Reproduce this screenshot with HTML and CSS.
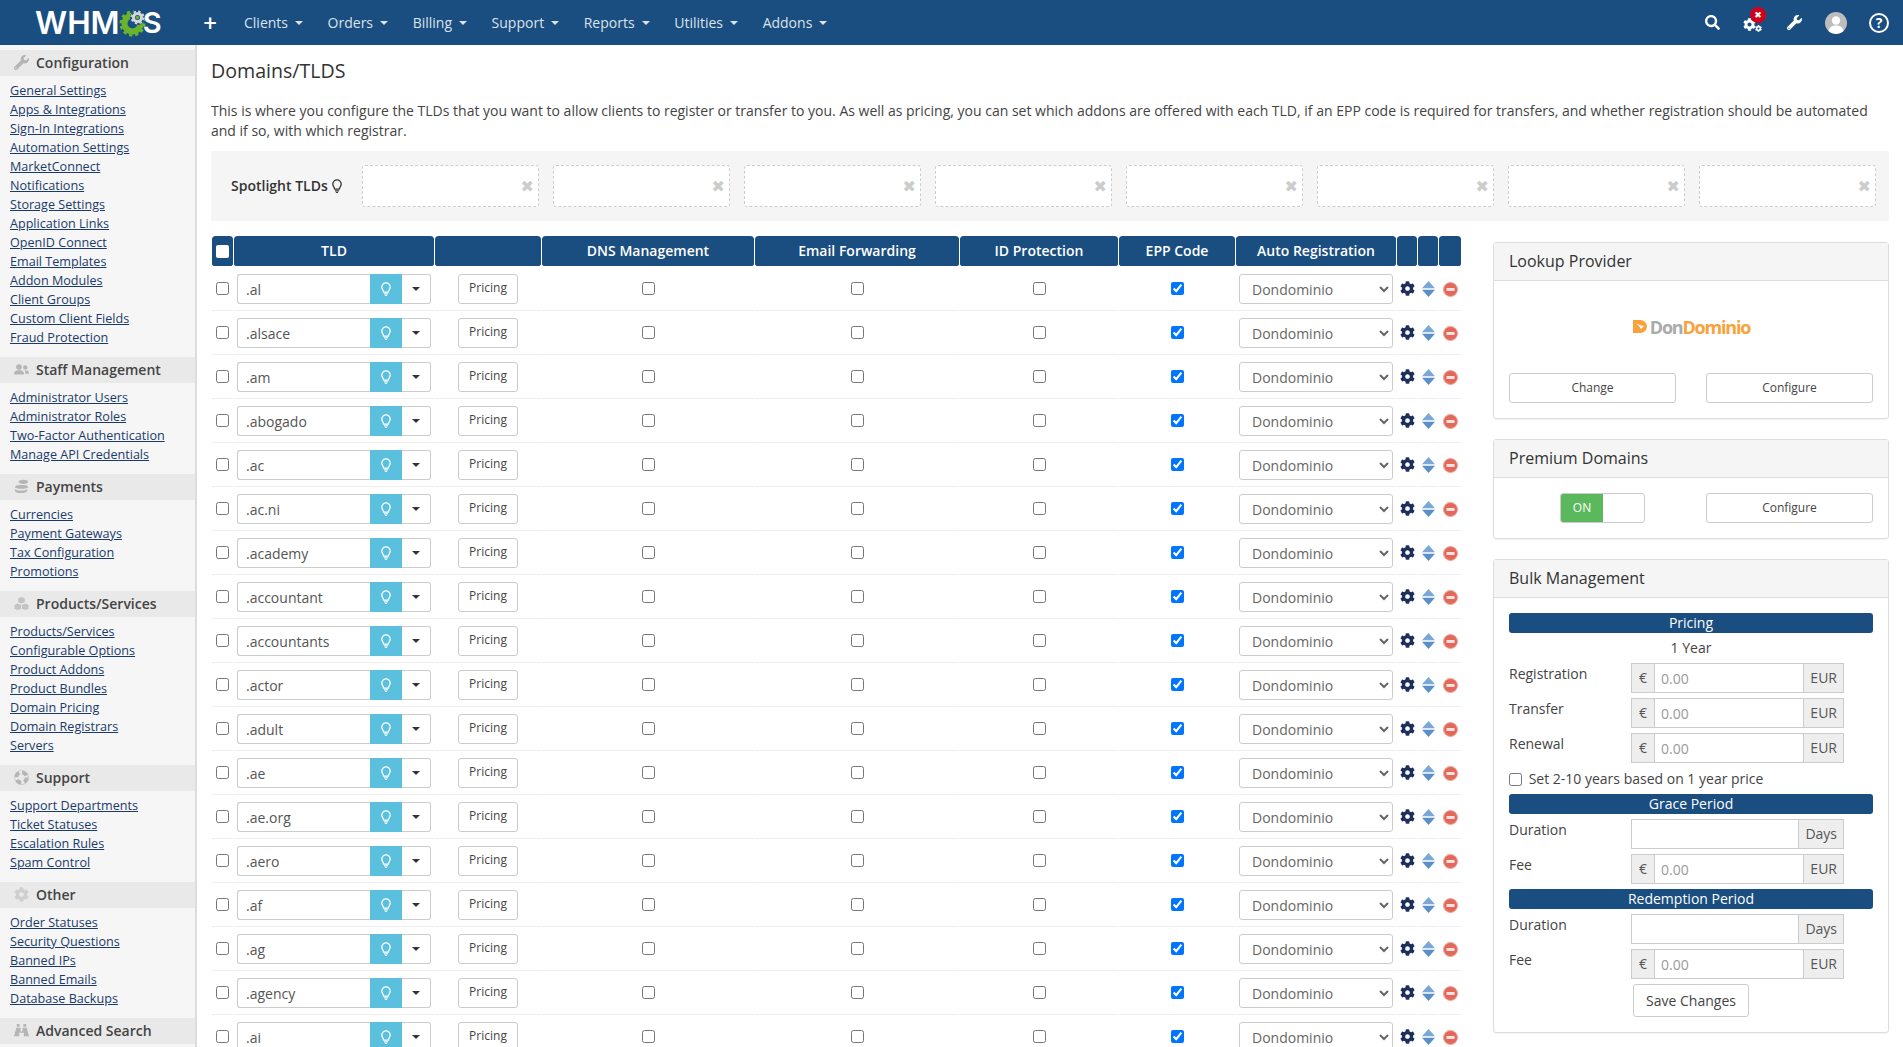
FILE: index.html
```html
<!DOCTYPE html>
<html lang="en">
<head>
    <meta charset="UTF-8">
    <title>Domains/TLDS</title>
    <link rel="stylesheet" href="styles.css">
</head>
<body>
<svg class="defs" width="0" height="0">
    <symbol id="i-cog" viewBox="0 0 512 512"><path d="M487.4 315.7l-42.6-24.6c4.3-23.2 4.3-47 0-70.2l42.6-24.6c4.9-2.8 7.1-8.6 5.5-14-11.1-35.6-30-67.8-54.7-94.6-3.8-4.1-10-5.1-14.8-2.3L380.8 110c-17.9-15.4-38.5-27.3-60.8-35.1V25.8c0-5.6-3.9-10.5-9.4-11.7-36.7-8.2-74.3-7.8-109.2 0-5.5 1.2-9.4 6.1-9.4 11.7V75c-22.2 7.9-42.8 19.8-60.8 35.1L88.7 85.5c-4.9-2.8-11-1.9-14.8 2.3-24.7 26.7-43.6 58.9-54.7 94.6-1.7 5.4.6 11.2 5.5 14L67.3 221c-4.3 23.2-4.3 47 0 70.2l-42.6 24.6c-4.9 2.8-7.1 8.6-5.5 14 11.1 35.6 30 67.8 54.7 94.6 3.8 4.1 10 5.1 14.8 2.3l42.6-24.6c17.9 15.4 38.5 27.3 60.8 35.1v49.2c0 5.6 3.9 10.5 9.4 11.7 36.7 8.2 74.3 7.8 109.2 0 5.5-1.2 9.4-6.1 9.4-11.7v-49.2c22.2-7.9 42.8-19.8 60.8-35.1l42.6 24.6c4.9 2.8 11 1.9 14.8-2.3 24.7-26.7 43.6-58.9 54.7-94.6 1.5-5.5-.7-11.3-5.6-14.1zM256 336c-44.1 0-80-35.9-80-80s35.9-80 80-80 80 35.9 80 80-35.9 80-80 80z"/></symbol>
    <symbol id="i-wrench" viewBox="0 0 512 512"><path d="M507.73 109.1c-2.24-9.03-13.54-12.09-20.12-5.51l-74.36 74.36-67.88-11.31-11.31-67.88 74.36-74.36c6.62-6.62 3.43-17.9-5.66-20.16-47.38-11.74-99.55.91-136.58 37.93-39.64 39.64-50.55 97.1-34.05 147.2L18.74 402.76c-24.99 24.99-24.99 65.51 0 90.5 24.99 24.99 65.51 24.99 90.5 0l213.21-213.21c50.12 16.71 107.47 5.68 147.37-34.22 37.07-37.07 49.7-89.32 37.91-136.73zM64 472c-13.25 0-24-10.75-24-24 0-13.26 10.75-24 24-24s24 10.74 24 24c0 13.25-10.75 24-24 24z"/></symbol>
    <symbol id="i-bulb" viewBox="0 0 16 20"><path d="M8 1.200a5.600 5.600 0 0 0-5.600 5.600c0 2.600 1.900 3.900 2.500 6.600h6.200c.6-2.700 2.500-4 2.500-6.600A5.600 5.600 0 0 0 8 1.200z" fill="none" stroke="currentColor" stroke-width="1.700"/><path d="M5.400 15h5.200v1.500H5.400zM6.200 17.300h3.600l-.9 1.500H7.100z"/></symbol>
</svg>

<header class="topbar">
    <a class="logo"><span>WHM</span><svg class="logo-gear" viewBox="0 0 30 30">
        <g fill="none">
            <circle cx="14.500" cy="15.500" r="8" stroke="#6ab42d" stroke-width="6"/>
            <circle cx="14.500" cy="15.500" r="11.500" stroke="#6ab42d" stroke-width="3" stroke-dasharray="3.200 2.820"/>
        </g>
        <circle cx="19.500" cy="9.500" r="7.500" fill="#1a4d80"/>
        <g fill="none">
            <circle cx="19.500" cy="9.500" r="4" stroke="#d3d7da" stroke-width="3"/>
            <circle cx="19.500" cy="9.500" r="6" stroke="#d3d7da" stroke-width="2" stroke-dasharray="2.400 2.310"/>
        </g>
        <circle cx="19.500" cy="9.500" r="1.800" fill="#6ab42d"/>
    </svg><span class="logo-s">S</span></a>
    <span class="plus">+</span>
    <nav class="nav">
        <a>Clients</a>
        <a>Orders</a>
        <a>Billing</a>
        <a>Support</a>
        <a>Reports</a>
        <a>Utilities</a>
        <a>Addons</a>
    </nav>
    <div class="top-icons">
        <svg class="ti-search" viewBox="0 0 512 512"><path d="M505 442.7L405.3 343c-4.500-4.500-10.600-7-17-7H372c27.600-35.300 44-79.700 44-128C416 93.100 322.900 0 208 0S0 93.100 0 208s93.100 208 208 208c48.300 0 92.700-16.400 128-44v16.300c0 6.400 2.500 12.500 7 17l99.700 99.700c9.400 9.400 24.600 9.400 33.900 0l28.300-28.300c9.400-9.400 9.400-24.600.1-34zM208 336c-70.700 0-128-57.200-128-128 0-70.700 57.200-128 128-128 70.700 0 128 57.200 128 128 0 70.700-57.200 128-128 128z"/></svg>
        <span class="ti-cogs">
            <svg class="cog-big"><use href="#i-cog"/></svg>
            <svg class="cog-small"><use href="#i-cog"/></svg>
            <span class="badge">&#10006;</span>
        </span>
        <svg class="ti-wrench"><use href="#i-wrench"/></svg>
        <svg class="ti-avatar" viewBox="0 0 22 22"><circle cx="11" cy="11" r="11" fill="#bdbdbd"/><circle cx="11" cy="8.500" r="4.200" fill="#fff"/><path d="M3.500 19c.8-4 3.500-5.500 7.500-5.500s6.700 1.500 7.500 5.500a11 11 0 0 1-15 0z" fill="#fff"/></svg>
        <span class="ti-help">?</span>
    </div>
</header>

<div class="page">
    <aside class="sidebar">
        <h3 class="side-head"><svg class="side-icon"><use href="#i-wrench"/></svg>Configuration</h3>
        <ul class="side-list">
            <li><a>General Settings</a></li>
            <li><a>Apps &amp; Integrations</a></li>
            <li><a>Sign-In Integrations</a></li>
            <li><a>Automation Settings</a></li>
            <li><a>MarketConnect</a></li>
            <li><a>Notifications</a></li>
            <li><a>Storage Settings</a></li>
            <li><a>Application Links</a></li>
            <li><a>OpenID Connect</a></li>
            <li><a>Email Templates</a></li>
            <li><a>Addon Modules</a></li>
            <li><a>Client Groups</a></li>
            <li><a>Custom Client Fields</a></li>
            <li><a>Fraud Protection</a></li>
        </ul>
        <h3 class="side-head"><svg class="side-icon" viewBox="0 0 18 14"><circle cx="6" cy="4" r="3.400"/><path d="M0 13c0-4 2.500-5 6-5s6 1 6 5z"/><circle cx="13.500" cy="4.500" r="2.600"/><path d="M13 8c3 0 5 1 5 4h-4.500c0-1.500-.2-3-.5-4z"/></svg>Staff Management</h3>
        <ul class="side-list">
            <li><a>Administrator Users</a></li>
            <li><a>Administrator Roles</a></li>
            <li><a>Two-Factor Authentication</a></li>
            <li><a>Manage API Credentials</a></li>
        </ul>
        <h3 class="side-head"><svg class="side-icon" viewBox="0 0 16 16"><ellipse cx="10" cy="3" rx="5" ry="2.200"/><path d="M1 8.500c0-1.200 2-2.200 7-2.200s7 1 7 2.200-3 2-7 2-7-.8-7-2z"/><path d="M1 11c1 1 3.500 1.300 7 1.300s5-.3 6-1.300v1.500c0 1.500-3 2.500-6.500 2.500S1 14 1 12.500z"/></svg>Payments</h3>
        <ul class="side-list">
            <li><a>Currencies</a></li>
            <li><a>Payment Gateways</a></li>
            <li><a>Tax Configuration</a></li>
            <li><a>Promotions</a></li>
        </ul>
        <h3 class="side-head"><svg class="side-icon" viewBox="0 0 16 14"><path d="M8 0l3.500 1.500v4L8 7 4.500 5.500v-4zM4 7l3.500 1.500v4L4 14 .5 12.500v-4zM12 7l3.500 1.500v4L12 14l-3.500-1.500v-4z" opacity=".75"/></svg>Products/Services</h3>
        <ul class="side-list">
            <li><a>Products/Services</a></li>
            <li><a>Configurable Options</a></li>
            <li><a>Product Addons</a></li>
            <li><a>Product Bundles</a></li>
            <li><a>Domain Pricing</a></li>
            <li><a>Domain Registrars</a></li>
            <li><a>Servers</a></li>
        </ul>
        <h3 class="side-head"><svg class="side-icon" viewBox="0 0 16 16"><circle cx="8" cy="8" r="5.500" fill="none" stroke="currentColor" stroke-width="4" stroke-dasharray="5.500 3.140"/><circle cx="8" cy="8" r="7.500" fill="none" stroke="currentColor" stroke-width="1" opacity=".5"/></svg>Support</h3>
        <ul class="side-list">
            <li><a>Support Departments</a></li>
            <li><a>Ticket Statuses</a></li>
            <li><a>Escalation Rules</a></li>
            <li><a>Spam Control</a></li>
        </ul>
        <h3 class="side-head"><svg class="side-icon side-icon-light"><use href="#i-cog"/></svg>Other</h3>
        <ul class="side-list">
            <li><a>Order Statuses</a></li>
            <li><a>Security Questions</a></li>
            <li><a>Banned IPs</a></li>
            <li><a>Banned Emails</a></li>
            <li><a>Database Backups</a></li>
        </ul>
        <h3 class="side-head"><svg class="side-icon" viewBox="0 0 16 14"><path d="M3 0h3v3H3zM10 0h3v3h-3zM2.500 4H7v4H9V4h4.500L16 13h-5.500V9.500h-5V13H0z"/></svg>Advanced Search</h3>
    </aside>

    <main class="content">
        <h1 class="title">Domains/TLDS</h1>
        <p class="intro">This is where you configure the TLDs that you want to allow clients to register or transfer to you. As well as pricing, you can set which addons are offered with each TLD, if an EPP code is required for transfers, and whether registration should be automated and if so, with which registrar.</p>

        <div class="spotlight">
            <div class="spot-label">Spotlight TLDs <svg class="spot-bulb"><use href="#i-bulb"/></svg></div>
            <div class="spot-slot"><span class="spot-x">&#10006;</span></div>
            <div class="spot-slot"><span class="spot-x">&#10006;</span></div>
            <div class="spot-slot"><span class="spot-x">&#10006;</span></div>
            <div class="spot-slot"><span class="spot-x">&#10006;</span></div>
            <div class="spot-slot"><span class="spot-x">&#10006;</span></div>
            <div class="spot-slot"><span class="spot-x">&#10006;</span></div>
            <div class="spot-slot"><span class="spot-x">&#10006;</span></div>
            <div class="spot-slot"><span class="spot-x">&#10006;</span></div>
        </div>

        <div class="columns">
            <table class="tld-table">
                <colgroup>
                    <col class="c-check"><col class="c-tld"><col class="c-price"><col class="c-dns"><col class="c-mail"><col class="c-id"><col class="c-epp"><col class="c-auto"><col class="c-ic"><col class="c-ic"><col class="c-ic2">
                </colgroup>
                <thead>
                    <tr>
                        <th><span class="head-check"></span></th>
                        <th>TLD</th>
                        <th></th>
                        <th>DNS Management</th>
                        <th>Email Forwarding</th>
                        <th>ID Protection</th>
                        <th>EPP Code</th>
                        <th>Auto Registration</th>
                        <th></th>
                        <th></th>
                        <th></th>
                    </tr>
                </thead>
                <tbody id="tldRows"></tbody>
            </table>

            <div class="side-panels">
                <section class="panel">
                    <div class="panel-head">Lookup Provider</div>
                    <div class="panel-body">
                        <div class="provider-logo">
                            <svg class="dd-mark" viewBox="0 0 14 13"><path d="M0 0h7.500a6.500 6.500 0 0 1 0 13H0z" fill="#f9a23b"/><path d="M3 3.500l5 2 3 .5-3 3-2-3z" fill="#fff"/></svg>
                            <span class="dd-don">Don</span><span class="dd-dom">Dominio</span>
                        </div>
                        <div class="btn-row">
                            <a class="btn">Change</a>
                            <a class="btn">Configure</a>
                        </div>
                    </div>
                </section>
                <section class="panel">
                    <div class="panel-head">Premium Domains</div>
                    <div class="panel-body">
                        <div class="btn-row">
                            <div class="toggle-wrap"><div class="toggle"><span class="toggle-on">ON</span></div></div>
                            <a class="btn">Configure</a>
                        </div>
                    </div>
                </section>
                <section class="panel">
                    <div class="panel-head">Bulk Management</div>
                    <div class="panel-body bulk">
                        <div class="bar">Pricing</div>
                        <div class="year">1 Year</div>
                        <div class="field"><label>Registration</label><div class="igroup"><span class="addon addon-l">&euro;</span><input class="ifield" placeholder="0.00"><span class="addon addon-r">EUR</span></div></div>
                        <div class="field"><label>Transfer</label><div class="igroup"><span class="addon addon-l">&euro;</span><input class="ifield" placeholder="0.00"><span class="addon addon-r">EUR</span></div></div>
                        <div class="field"><label>Renewal</label><div class="igroup"><span class="addon addon-l">&euro;</span><input class="ifield" placeholder="0.00"><span class="addon addon-r">EUR</span></div></div>
                        <label class="years"><input type="checkbox"> Set 2-10 years based on 1 year price</label>
                        <div class="bar">Grace Period</div>
                        <div class="field field-first"><label>Duration</label><div class="igroup"><input class="ifield"><span class="addon addon-r">Days</span></div></div>
                        <div class="field"><label>Fee</label><div class="igroup"><span class="addon addon-l">&euro;</span><input class="ifield" placeholder="0.00"><span class="addon addon-r">EUR</span></div></div>
                        <div class="bar">Redemption Period</div>
                        <div class="field field-first"><label>Duration</label><div class="igroup"><input class="ifield"><span class="addon addon-r">Days</span></div></div>
                        <div class="field"><label>Fee</label><div class="igroup"><span class="addon addon-l">&euro;</span><input class="ifield" placeholder="0.00"><span class="addon addon-r">EUR</span></div></div>
                        <div class="save-row"><a class="btn btn-save">Save Changes</a></div>
                    </div>
                </section>
            </div>
        </div>
    </main>
</div>
<script src="rows.js"></script>
</body>
</html>
```

FILE: styles.css
```css
* {
    box-sizing: border-box;
}

html, body {
    height: 100%;
    margin: 0;
    overflow: hidden;
}

body {
    font-family: "Open Sans", "Liberation Sans", sans-serif;
    font-size: 14px;
    color: #444;
    background-color: #fff;
}

.defs {
    position: absolute;
}

/* Top bar */
.topbar {
    display: flex;
    align-items: center;
    height: 45px;
    background-color: #1a4d80;
    color: #fff;
}

.logo {
    display: flex;
    align-items: center;
    width: 202px;
    padding-left: 35px;
    font-family: Inter, sans-serif;
    font-size: 31.5px;
    font-weight: 600;
    color: #fff;
}

.logo-gear {
    flex: none;
    width: 30px;
    height: 30px;
    margin: 0 -5.5px 0 -1.5px;
}

.logo-s {
    font-size: 29px;
}

.plus {
    width: 16px;
    font-size: 24px;
    font-weight: 600;
    line-height: 24px;
    text-align: center;
}

.nav {
    display: flex;
    margin-left: 26px;
}

.nav a {
    display: flex;
    align-items: center;
    margin-right: 24.6px;
    color: #dbe3eb;
}

.nav a::after {
    content: "";
    margin-left: 7px;
    border-top: 4px solid #dbe3eb;
    border-left: 4px solid transparent;
    border-right: 4px solid transparent;
}

.top-icons {
    position: relative;
    margin-left: auto;
    display: flex;
    align-items: center;
    padding-right: 14px;
}

.top-icons svg {
    fill: #fff;
}

.ti-search {
    width: 15px;
    height: 15px;
    margin-right: 23px;
    margin-bottom: 1px;
}

.ti-cogs {
    position: relative;
    width: 19px;
    height: 20px;
    margin-right: 25px;
}

.cog-big {
    position: absolute;
    left: 0;
    top: 5px;
    width: 13px;
    height: 13px;
}

.cog-small {
    position: absolute;
    left: 12px;
    top: 12px;
    width: 7px;
    height: 7px;
}

.badge {
    position: absolute;
    left: 7px;
    top: -6px;
    width: 16px;
    height: 16px;
    border-radius: 50%;
    background-color: #d0021b;
    color: #fff;
    font-family: "DejaVu Sans", sans-serif;
    font-size: 9px;
    line-height: 16px;
    text-align: center;
}

.ti-wrench {
    width: 15px;
    height: 15px;
    margin-right: 23px;
}

.ti-avatar {
    width: 22px;
    height: 22px;
    margin-right: 22px;
}

.ti-help {
    width: 20px;
    height: 20px;
    border: 2px solid #fff;
    border-radius: 50%;
    font-size: 14px;
    font-weight: 700;
    line-height: 16px;
    text-align: center;
}

/* Page */
.page {
    display: flex;
    height: 1002px;
}

.sidebar {
    flex: 0 0 197px;
    padding-top: 5px;
    background-color: #f6f6f6;
    border-right: 2px solid #ddd;
}

.side-head {
    display: flex;
    align-items: center;
    height: 26px;
    margin: 0;
    padding: 0 0 2px 14px;
    background-color: #e9e9e9;
    font-size: 14px;
    font-weight: 600;
    color: #444;
}

.side-icon {
    width: 15px;
    height: 15px;
    margin-right: 7px;
    fill: #b5b5b5;
    color: #b5b5b5;
}

.side-icon-light {
    fill: #cfcfcf;
}

.side-list {
    list-style: none;
    margin: 0 0 10px;
    padding: 5px 0 0 10px;
}

.side-list li {
    height: 19px;
    font-size: 12.6px;
    line-height: 19px;
}

.side-list a {
    color: #1a3a6b;
    text-decoration: underline;
}

.content {
    flex: 1;
    padding: 0 14px;
    min-width: 0;
}

.title {
    margin: 12px 0 0;
    font-size: 19.6px;
    font-weight: 400;
    line-height: 28px;
    color: #333;
}

.intro {
    margin: 16px 0 0;
    line-height: 20px;
}

.spotlight {
    display: flex;
    align-items: center;
    height: 70px;
    margin-top: 10px;
    padding: 0 12px 0 20px;
    background-color: #f5f5f5;
}

.spot-label {
    width: 131px;
    padding-bottom: 2px;
    font-weight: 600;
    color: #333;
    white-space: nowrap;
}

.spot-bulb {
    width: 12px;
    height: 15px;
    vertical-align: -3px;
    fill: #333;
    color: #333;
}

.spot-slot {
    display: flex;
    align-items: center;
    justify-content: flex-end;
    width: 177px;
    height: 42px;
    margin-right: 14px;
    padding-right: 4px;
    border: 1px dashed #ccc;
    border-radius: 3px;
    background-color: #fff;
}

.spot-slot:last-child {
    margin-right: 0;
}

.spot-x {
    font-family: "DejaVu Sans", sans-serif;
    font-size: 16px;
    color: #ccc;
}

.columns {
    display: flex;
    margin-top: 15px;
}

/* TLD table */
.tld-table {
    flex: none;
    table-layout: fixed;
    width: 1251px;
    height: 0;
    border-collapse: separate;
    border-spacing: 1px 0;
}

.c-check { width: 21px; }
.c-tld { width: 200px; }
.c-price { width: 106px; }
.c-dns { width: 212px; }
.c-mail { width: 204px; }
.c-id { width: 158px; }
.c-epp { width: 116px; }
.c-auto { width: 160px; }
.c-ic { width: 20px; }
.c-ic2 { width: 22px; }

.tld-table th {
    height: 31px;
    padding: 0 0 1px;
    background-color: #1a4d80;
    background-clip: padding-box;
    border-bottom: 1px solid transparent;
    border-radius: 3px;
    color: #fff;
    font-size: 14px;
    font-weight: 600;
    text-align: center;
}

.head-check {
    display: block;
    width: 13px;
    height: 13px;
    margin: 1px auto 0;
    background-color: #fff;
    border-radius: 2px;
}

.tld-table td {
    height: 44px;
    padding: 1px 0 0;
    border-bottom: 1px solid #eee;
    text-align: center;
}

.tld-table input[type="checkbox"] {
    display: block;
    width: 13px;
    height: 13px;
    margin: 0 auto 1px;
}

.tld-group {
    display: flex;
    width: 194px;
    height: 30px;
    margin-left: 3px;
}

.tld-input {
    width: 133px;
    padding: 0 0 0 8px;
    border: 1px solid #ccc;
    border-right: 0;
    border-radius: 3px 0 0 3px;
    font-family: inherit;
    font-size: 14px;
    color: #555;
}

.tld-spot {
    display: flex;
    align-items: center;
    justify-content: center;
    width: 32px;
    background-color: #5bc0de;
    color: #fff;
    fill: #fff;
}

.tld-spot svg {
    width: 12px;
    height: 15px;
}

.tld-drop {
    display: flex;
    align-items: center;
    justify-content: center;
    width: 29px;
    border: 1px solid #ccc;
    border-left: 0;
    border-radius: 0 3px 3px 0;
}

.tld-drop::after {
    content: "";
    border-top: 4px solid #333;
    border-left: 4px solid transparent;
    border-right: 4px solid transparent;
}

.price-btn {
    display: block;
    width: 60px;
    height: 30px;
    margin: 0 auto;
    border: 1px solid #ccc;
    border-radius: 3px;
    font-size: 12px;
    line-height: 26px;
    color: #444;
}

.auto-select {
    display: block;
    width: 154px;
    height: 30px;
    margin: 0 auto;
    padding-left: 8px;
    border: 1px solid #ccc;
    border-radius: 3px;
    background-color: #fff;
    font-family: inherit;
    font-size: 14px;
    color: #666;
}

.act {
    display: block;
    margin: 0 auto;
}

.act-cog {
    width: 15px;
    height: 15px;
    margin-bottom: 2px;
    fill: #1c2f5c;
}

.act-sort {
    width: 13px;
    height: 16px;
}

.act-del {
    width: 15px;
    height: 15px;
}

/* Right column */
.side-panels {
    flex: 0 0 396px;
    margin-left: 31px;
    padding-top: 6px;
}

.panel {
    margin-bottom: 20px;
    border: 1px solid #ddd;
    border-radius: 3px;
    box-shadow: 0 1px 1px rgba(0, 0, 0, 0.05);
}

.panel-head {
    height: 38px;
    padding-left: 15px;
    background-color: #f5f5f5;
    border-bottom: 1px solid #ddd;
    font-size: 16px;
    line-height: 36px;
    color: #333;
}

.panel-body {
    padding: 15px;
}

.provider-logo {
    display: flex;
    align-items: center;
    justify-content: center;
    height: 77px;
    padding: 0 0 16px 1px;
    font-size: 18px;
    font-weight: 700;
    letter-spacing: -1.2px;
}

.dd-mark {
    width: 14px;
    height: 13px;
    margin-right: 3px;
}

.dd-don {
    color: #aaa;
}

.dd-dom {
    color: #f9a23b;
}

.btn-row {
    display: flex;
    justify-content: space-between;
}

.btn {
    display: block;
    width: 167px;
    height: 30px;
    border: 1px solid #ccc;
    border-radius: 3px;
    background-color: #fff;
    font-size: 12px;
    line-height: 28px;
    text-align: center;
    color: #444;
}

.toggle-wrap {
    width: 167px;
    padding-left: 51px;
}

.toggle {
    width: 85px;
    height: 30px;
    border: 1px solid #ccc;
    border-radius: 3px;
    overflow: hidden;
}

.toggle-on {
    display: block;
    width: 42px;
    height: 28px;
    background-color: #5cb85c;
    color: #fff;
    font-size: 12px;
    line-height: 28px;
    text-align: center;
}

.bar {
    height: 20px;
    border-radius: 3px;
    background-color: #1a4d80;
    color: #fff;
    line-height: 20px;
    text-align: center;
}

.year {
    height: 30px;
    line-height: 30px;
    text-align: center;
}

.field {
    display: flex;
    height: 30px;
    margin-bottom: 5px;
}

.field-first {
    margin-top: 5px;
}

.field label {
    width: 122px;
    line-height: 22px;
}

.igroup {
    display: flex;
    width: 213px;
    height: 30px;
}

.addon {
    border: 1px solid #ccc;
    background-color: #eee;
    line-height: 28px;
    text-align: center;
    color: #555;
}

.addon-l {
    flex: 0 0 23px;
    border-right: 0;
}

.addon-r {
    padding: 0 6px;
    border-left: 0;
}

.ifield {
    flex: 1;
    min-width: 0;
    padding-left: 6px;
    border: 1px solid #ccc;
    font-family: inherit;
    font-size: 14px;
}

.ifield::placeholder {
    color: #999;
}

.years {
    display: block;
    height: 26px;
    line-height: 22px;
}

.years input {
    width: 13px;
    height: 13px;
    margin: 0 3px 0 0;
    vertical-align: -2px;
}

.save-row {
    display: flex;
    justify-content: center;
}

.btn-save {
    width: 116px;
    height: 33px;
    font-size: 14px;
    line-height: 31px;
}
```

FILE: rows.js
```js
// TLD rows for the pricing table
const tlds = ['.al', '.alsace', '.am', '.abogado', '.ac', '.ac.ni', '.academy', '.accountant', '.accountants',
    '.actor', '.adult', '.ae', '.ae.org', '.aero', '.af', '.ag', '.agency', '.ai'];

const rows = document.getElementById('tldRows');

tlds.forEach(tld => {
    const row = document.createElement('tr');
    row.innerHTML = `
        <td><input type="checkbox"></td>
        <td>
            <div class="tld-group">
                <input class="tld-input" value="${tld}">
                <span class="tld-spot"><svg><use href="#i-bulb"/></svg></span>
                <span class="tld-drop"></span>
            </div>
        </td>
        <td><a class="price-btn">Pricing</a></td>
        <td><input type="checkbox"></td>
        <td><input type="checkbox"></td>
        <td><input type="checkbox"></td>
        <td><input type="checkbox" checked></td>
        <td><select class="auto-select"><option>Dondominio</option></select></td>
        <td><svg class="act act-cog"><use href="#i-cog"/></svg></td>
        <td><svg class="act act-sort" viewBox="0 0 13 16"><path d="M6.500 0l6.500 7.300H0z" fill="#7aa7d8"/><path d="M0 8.700h13L6.500 16z" fill="#5a8fc8"/></svg></td>
        <td><svg class="act act-del" viewBox="0 0 15 15"><circle cx="7.500" cy="7.500" r="7" fill="#e4685a" stroke="#eda69d"/><rect x="3.500" y="6" width="8" height="3" fill="#fbe4e0"/></svg></td>
    `;
    rows.appendChild(row);
});
```
